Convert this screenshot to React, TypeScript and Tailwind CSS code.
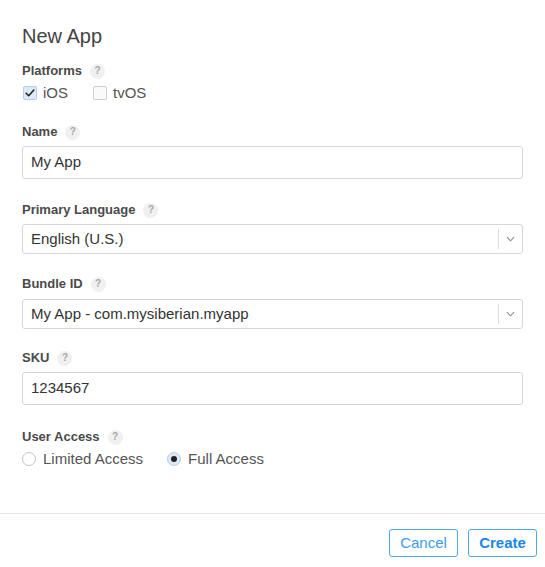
import { useState } from 'react'

function Help() {
  return (
    <span className="ml-2 inline-flex h-[15px] w-[15px] items-center justify-center rounded-full bg-[#f0f0f0] text-[10px] leading-none text-[#a8a8a8]">
      ?
    </span>
  )
}

function Label({ text, className = '' }: { text: string; className?: string }) {
  return (
    <div className={`flex h-[16px] items-center text-[13px] font-semibold text-[#4a4a4a] ${className}`}>
      {text}
      <Help />
    </div>
  )
}

function Checkbox({ label, checked }: { label: string; checked: boolean }) {
  return (
    <label className="flex items-center gap-[6px] text-[15px] text-[#555]">
      <span
        className={`flex h-[14px] w-[14px] items-center justify-center rounded-[2px] border ${
          checked ? 'border-[#b9cde4] bg-[#dde9f6]' : 'border-[#cfcfcf] bg-[#fafafa]'
        }`}
      >
        {checked && (
          <svg viewBox="0 0 14 14" className="h-[12px] w-[12px]">
            <path d="M2.5 7.2l3 3L11.5 3.5" fill="none" stroke="#222" strokeWidth="1.8" strokeLinecap="round" strokeLinejoin="round" />
          </svg>
        )}
      </span>
      {label}
    </label>
  )
}

function Radio({ label, checked }: { label: string; checked: boolean }) {
  return (
    <label className="flex items-center gap-[7px] text-[15px] text-[#555]">
      <span
        className={`flex h-[14px] w-[14px] items-center justify-center rounded-full border ${
          checked ? 'border-[#b9cde4] bg-[#dde9f6]' : 'border-[#c4c4c4] bg-white'
        }`}
      >
        {checked && <span className="h-[6px] w-[6px] rounded-full bg-[#222]" />}
      </span>
      {label}
    </label>
  )
}

function TextInput({ value, className = '' }: { value: string; className?: string }) {
  return (
    <div className={`flex h-[33px] items-center rounded-[3px] border border-[#d6d6d6] px-[8px] text-[15px] text-[#333] ${className}`}>
      {value}
    </div>
  )
}

function Select({ value, className = '' }: { value: string; className?: string }) {
  return (
    <div className={`flex h-[30px] items-center rounded-[3px] border border-[#d6d6d6] text-[15px] text-[#333] ${className}`}>
      <span className="flex-1 px-[8px]">{value}</span>
      <span className="h-[20px] w-px bg-[#dcdcdc]" />
      <span className="flex w-[23px] items-center justify-center">
        <svg viewBox="0 0 10 6" className="h-[6px] w-[9px]">
          <path d="M1 1l4 4 4-4" fill="none" stroke="#8a8a8a" strokeWidth="1.2" />
        </svg>
      </span>
    </div>
  )
}

export default function App() {
  const [access] = useState<'limited' | 'full'>('full')

  return (
    <div className="h-[567px] w-[545px] bg-white" style={{ fontFamily: '"Liberation Sans", Arial, sans-serif' }}>
      <div className="px-[22px] pt-[24px]">
        <h1 className="text-[20px] leading-[24px] font-normal text-[#444]">New App</h1>

        <Label text="Platforms" className="mt-[15px]" />
        <div className="mt-[5px] flex h-[18px] items-center gap-[25px] pl-[1px]">
          <Checkbox label="iOS" checked />
          <Checkbox label="tvOS" checked={false} />
        </div>

        <Label text="Name" className="mt-[22px]" />
        <TextInput value="My App" className="mt-[6px] h-[33px]" />

        <Label text="Primary Language" className="mt-[23px]" />
        <Select value="English (U.S.)" className="mt-[6px]" />

        <Label text="Bundle ID" className="mt-[22px]" />
        <Select value="My App - com.mysiberian.myapp" className="mt-[7px]" />

        <Label text="SKU" className="mt-[21px]" />
        <TextInput value="1234567" className="mt-[6px]" />

        <Label text="User Access" className="mt-[24px]" />
        <div className="mt-[5px] flex h-[18px] items-center gap-[24px]">
          <Radio label="Limited Access" checked={access === 'limited'} />
          <Radio label="Full Access" checked={access === 'full'} />
        </div>
      </div>

      <div className="mt-[45px] border-t border-[#e3e3e3]" />

      <div className="flex justify-end gap-[10px] pr-[8px] pt-[15px]">
        <button className="h-[28px] w-[69px] rounded-[3px] border border-[#4aa8f2] text-[15px] text-[#3d9bef]">Cancel</button>
        <button className="h-[28px] w-[69px] rounded-[3px] border border-[#4aa8f2] text-[15px] font-bold text-[#1a86ea]">Create</button>
      </div>
    </div>
  )
}
